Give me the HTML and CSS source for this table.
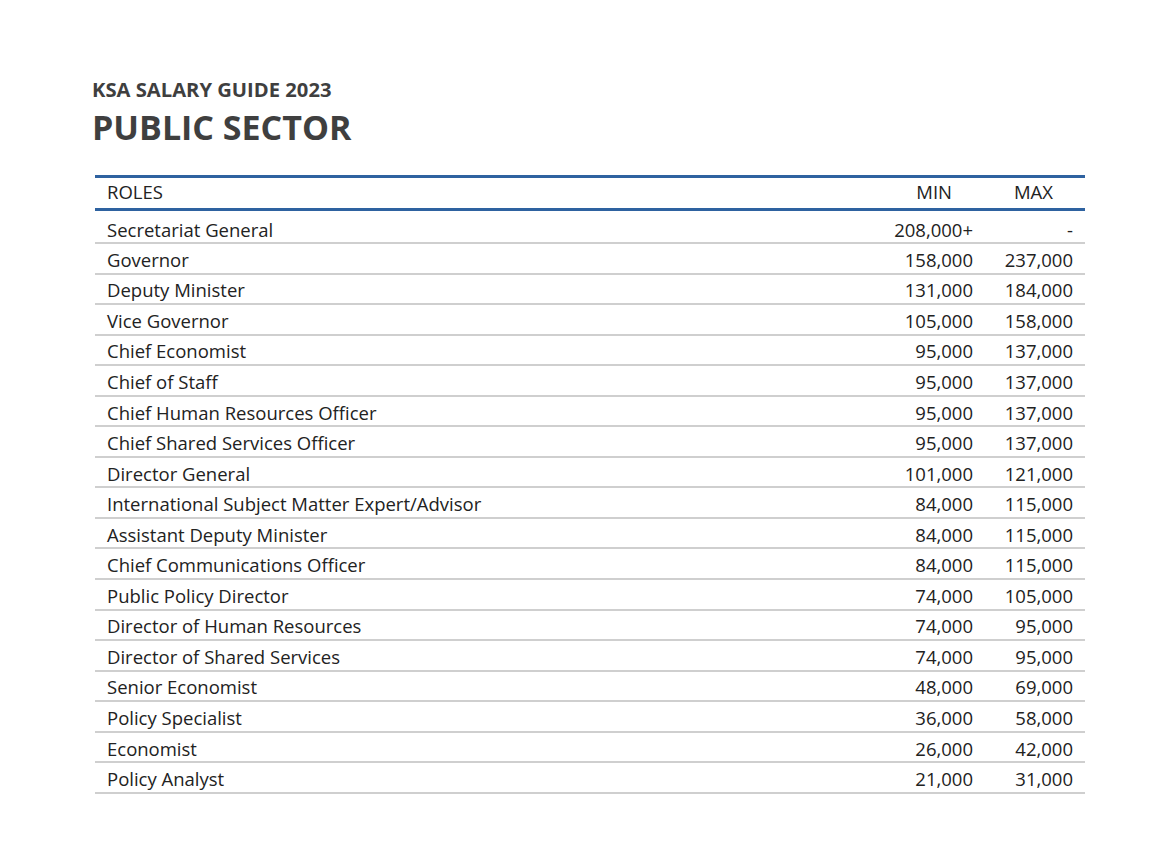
FILE: index.html
```html
<!DOCTYPE html>
<html lang="en">
<head>
<meta charset="utf-8">
<title>KSA Salary Guide 2023 - Public Sector</title>
<link rel="stylesheet" href="styles.css">
</head>
<body>
<main class="page">
  <header class="heading">
    <div class="kicker">KSA SALARY GUIDE 2023</div>
    <h1 class="title">PUBLIC SECTOR</h1>
  </header>
  <table class="salary">
    <thead>
      <tr><th class="role">ROLES</th><th class="num min">MIN</th><th class="num max">MAX</th></tr>
    </thead>
    <tbody>
      <tr class="first"><td class="role">Secretariat General</td><td class="num min">208,000+</td><td class="num max">-</td></tr>
      <tr><td class="role">Governor</td><td class="num min">158,000</td><td class="num max">237,000</td></tr>
      <tr><td class="role">Deputy Minister</td><td class="num min">131,000</td><td class="num max">184,000</td></tr>
      <tr><td class="role">Vice Governor</td><td class="num min">105,000</td><td class="num max">158,000</td></tr>
      <tr><td class="role">Chief Economist</td><td class="num min">95,000</td><td class="num max">137,000</td></tr>
      <tr><td class="role">Chief of Staff</td><td class="num min">95,000</td><td class="num max">137,000</td></tr>
      <tr><td class="role">Chief Human Resources Officer</td><td class="num min">95,000</td><td class="num max">137,000</td></tr>
      <tr><td class="role">Chief Shared Services Officer</td><td class="num min">95,000</td><td class="num max">137,000</td></tr>
      <tr><td class="role">Director General</td><td class="num min">101,000</td><td class="num max">121,000</td></tr>
      <tr><td class="role">International Subject Matter Expert/Advisor</td><td class="num min">84,000</td><td class="num max">115,000</td></tr>
      <tr><td class="role">Assistant Deputy Minister</td><td class="num min">84,000</td><td class="num max">115,000</td></tr>
      <tr><td class="role">Chief Communications Officer</td><td class="num min">84,000</td><td class="num max">115,000</td></tr>
      <tr><td class="role">Public Policy Director</td><td class="num min">74,000</td><td class="num max">105,000</td></tr>
      <tr><td class="role">Director of Human Resources</td><td class="num min">74,000</td><td class="num max">95,000</td></tr>
      <tr><td class="role">Director of Shared Services</td><td class="num min">74,000</td><td class="num max">95,000</td></tr>
      <tr><td class="role">Senior Economist</td><td class="num min">48,000</td><td class="num max">69,000</td></tr>
      <tr><td class="role">Policy Specialist</td><td class="num min">36,000</td><td class="num max">58,000</td></tr>
      <tr><td class="role">Economist</td><td class="num min">26,000</td><td class="num max">42,000</td></tr>
      <tr><td class="role">Policy Analyst</td><td class="num min">21,000</td><td class="num max">31,000</td></tr>
    </tbody>
  </table>
</main>
</body>
</html>
```
FILE: styles.css
```css
html, body {
  margin: 0;
  padding: 0;
  background: #ffffff;
}
body {
  font-family: "Open Sans", "Noto Sans", "Liberation Sans", sans-serif;
  color: #222222;
}
.page {
  padding: 76px 85px 0 92px;
}
.heading {
  color: #3f3f3f;
}
.kicker {
  font-size: 20.2px;
  font-weight: 700;
  line-height: 26px;
}
.title {
  margin: 5px 0 0;
  font-size: 34px;
  font-weight: 700;
  line-height: 40px;
}
.salary {
  margin: 28px 0 0 3px;
  width: 990px;
  border-collapse: collapse;
  font-size: 18.5px;
}
.salary thead tr {
  border-top: 3px solid #2e62a0;
  border-bottom: 3px solid #2e62a0;
}
.salary th {
  font-weight: 400;
  height: 27px;
  padding: 0 0 3px;
  text-align: left;
}
.salary td {
  height: 26.56px;
  padding: 2px 0 0;
  border-bottom: 2px solid #cfcfcf;
}
.salary tr.first td {
  height: 24px;
  padding-top: 6px;
}
.role {
  padding-left: 12px !important;
}
.num {
  text-align: right;
  white-space: nowrap;
}
.salary td.min {
  width: 120px;
}
.salary td.max {
  width: 100px;
  padding-right: 12px;
}
.salary th.min {
  text-align: right;
  padding-right: 21px;
}
.salary th.max {
  text-align: right;
  padding-right: 32px;
}
```
